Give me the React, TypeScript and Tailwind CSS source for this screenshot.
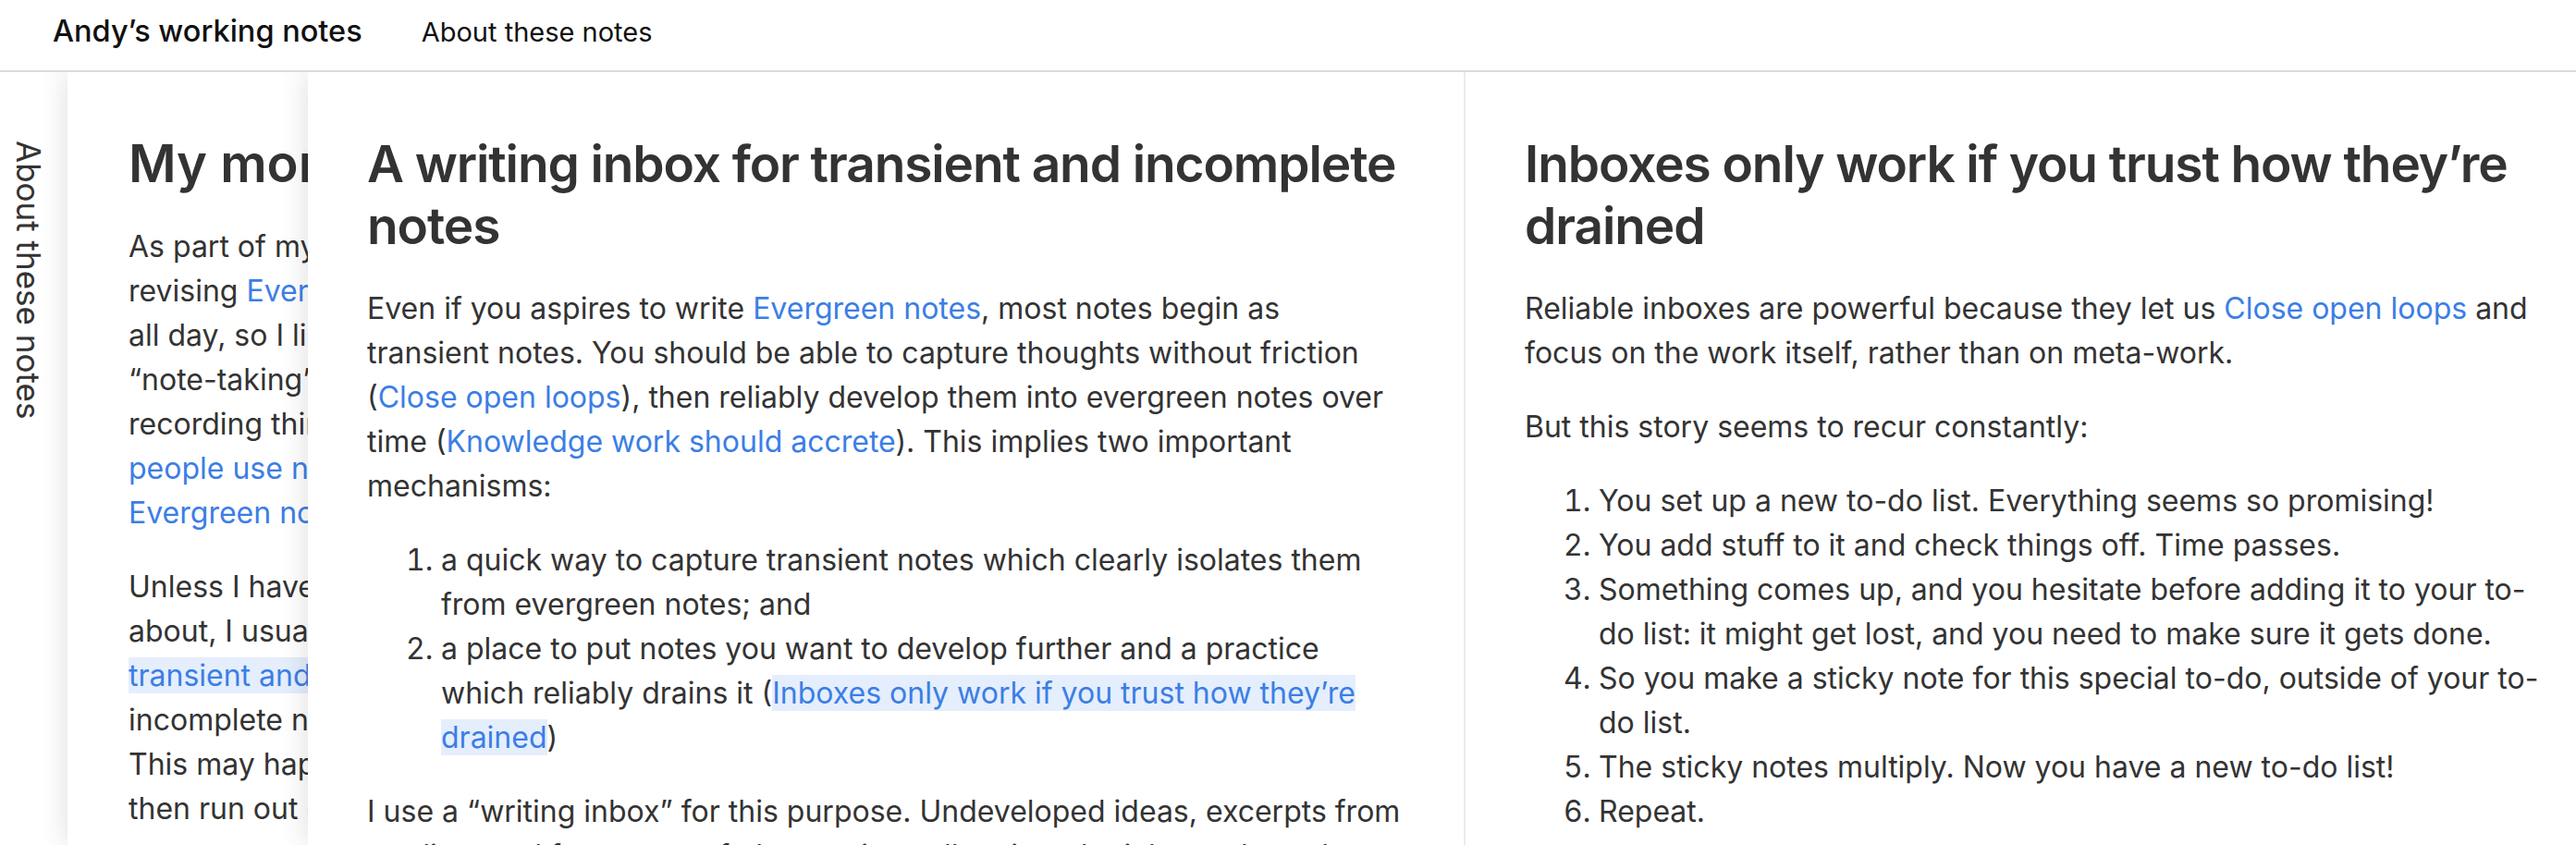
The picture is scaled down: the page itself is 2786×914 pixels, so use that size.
import React from "react";

const A = ({ children, hl }: { children: React.ReactNode; hl?: boolean }) => (
  <a className={hl ? "text-[#3b7ee6] bg-[#e5eefc]" : "text-[#3b7ee6]"}>{children}</a>
);

function Pane2() {
  return (
    <div className="relative z-[1] w-[260px] shrink-0 overflow-hidden bg-white shadow-[0_0_30px_rgba(0,0,0,0.14)]">
      <div className="w-[1250px] pl-[66px] pr-[64px] pt-[66px]">
        <h1 className="text-[56px] leading-[67px] font-semibold text-[#333] whitespace-nowrap">My morning writing practice</h1>
        <p className="mt-[32px] text-[32px] leading-[48px] text-[#333] whitespace-nowrap">
          As part of my morning routine, I spend time writing and
          <br />
          revising <A>Evergreen notes</A>. I have ideas and observations
          <br />
          all day, so I like to keep a lightweight capture habit. My
          <br />
          “note-taking” practice is mostly about reading and
          <br />
          recording things that seem interesting (see <A>How</A>
          <br />
          <A>people use notes as a bucket for storing ideas</A> and
          <br />
          <A>Evergreen notes should be concept-oriented</A>).
        </p>
        <p className="mt-[32px] text-[32px] leading-[48px] text-[#333] whitespace-nowrap">
          Unless I have a specific project I’m focused on writing
          <br />
          about, I usually begin by reviewing my <A>writing inbox for</A>
          <br />
          <A hl>transient and incomplete notes</A>, looking for an
          <br />
          incomplete note that feels promising to develop further.
          <br />
          This may happen because a note has been waiting a while, and I
          <br />
          then run out of time before fully developing it.
        </p>
      </div>
    </div>
  );
}

export default function App() {
  return (
    <div className="h-[914px] w-[2786px] overflow-hidden bg-white font-['Inter','Noto_Sans',sans-serif]">
      <header className="relative z-20 flex h-[78px] items-baseline gap-[64px] border-b-2 border-[#dadada] bg-white pl-[57px] pt-[10px] leading-[48px] text-[#111]">
        <a className="text-[32.5px] font-medium">Andy’s working notes</a>
        <a className="text-[29px]">About these notes</a>
      </header>
      <div className="flex h-[836px]">
        <div className="relative z-0 w-[73px] shrink-0 bg-white pl-[9px] pt-[74px]">
          <div className="text-[35px] leading-[44px] text-[#333] [writing-mode:vertical-rl] whitespace-nowrap">
            About these notes
          </div>
        </div>
        <Pane2 />
        <div className="relative z-[2] w-[1250px] shrink-0 bg-white px-[64px] pt-[66px] text-[#333] shadow-[0_0_30px_rgba(0,0,0,0.14)]">
          <h1 className="text-[55px] leading-[67px] font-semibold tracking-[-0.02em]">A writing inbox for transient and incomplete notes</h1>
          <p className="mt-[32px] text-[32px] leading-[48px]">
            Even if you aspires to write <A>Evergreen notes</A>, most notes begin as transient notes. You should be able to
            capture thoughts without friction (<A>Close open loops</A>), then reliably develop them into evergreen notes
            over time (<A>Knowledge work should accrete</A>). This implies two important mechanisms:
          </p>
          <ol className="mt-[32px] list-decimal pl-[80px] text-[32px] leading-[48px]">
            <li>a quick way to capture transient notes which clearly isolates them from evergreen notes; and</li>
            <li>
              a place to put notes you want to develop further and a practice which reliably drains it (
              <A hl>Inboxes only work if you trust how they’re drained</A>)
            </li>
          </ol>
          <p className="mt-[32px] text-[32px] leading-[48px]">
            I use a “writing inbox” for this purpose. Undeveloped ideas, excerpts from reading, and fragments of
            observations all go into the inbox, where they wait until I can develop them.
          </p>
        </div>
        <div className="relative z-[3] w-[1250px] shrink-0 border-l-2 border-[#ebebeb] bg-white px-[64px] pt-[66px] text-[#333]">
          <h1 className="text-[55px] leading-[67px] font-semibold tracking-[-0.02em]">Inboxes only work if you trust how they’re drained</h1>
          <p className="mt-[32px] text-[32px] leading-[48px]">
            Reliable inboxes are powerful because they let us <A>Close open loops</A> and focus on the work itself, rather
            than on meta-work.
          </p>
          <p className="mt-[32px] text-[32px] leading-[48px]">But this story seems to recur constantly:</p>
          <ol className="mt-[32px] list-decimal pl-[80px] text-[32px] leading-[48px]">
            <li>You set up a new to-do list. Everything seems so promising!</li>
            <li>You add stuff to it and check things off. Time passes.</li>
            <li>
              Something comes up, and you hesitate before adding it to your to-do list: it might get lost, and you need to
              make sure it gets done.
            </li>
            <li>So you make a sticky note for this special to-do, outside of your to-do list.</li>
            <li>The sticky notes multiply. Now you have a new to-do list!</li>
            <li>Repeat.</li>
          </ol>
        </div>
      </div>
    </div>
  );
}
